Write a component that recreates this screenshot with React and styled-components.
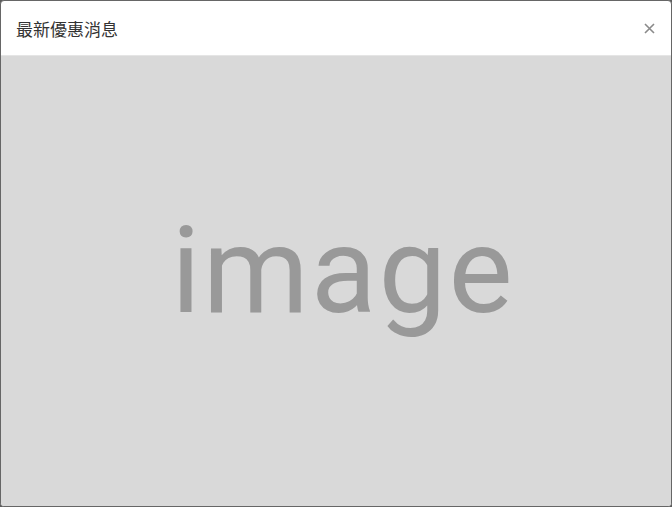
import styled, { createGlobalStyle } from "styled-components";

const GlobalStyle = createGlobalStyle`
  html, body {
    margin: 0;
    padding: 0;
    background: #5c5c5c;
  }
  * { box-sizing: border-box; }
`;

const Modal = styled.div`
  width: 672px;
  height: 507px;
  display: flex;
  flex-direction: column;
  background: #fff;
  border: 1px solid #666;
  border-radius: 4px;
  overflow: hidden;
`;

const Header = styled.div`
  height: 55px;
  flex-shrink: 0;
  display: flex;
  align-items: center;
  justify-content: space-between;
  padding: 0 15px 0 15px;
  border-bottom: 1px solid #e5e5e5;
`;

const Title = styled.h4`
  margin: 0;
  font-family: "Noto Sans CJK TC", "Noto Sans", sans-serif;
  font-weight: 400;
  font-size: 17px;
  color: #333;
`;

const Close = styled.button`
  border: 0;
  background: none;
  padding: 0;
  width: 14px;
  height: 14px;
  display: flex;
  align-items: center;
  justify-content: center;
  cursor: pointer;
`;

const Placeholder = styled.div`
  flex: 1;
  background: #d9d9d9;
  display: flex;
  align-items: center;
  justify-content: center;
  font-family: "Roboto", sans-serif;
  font-size: 121px;
  letter-spacing: 2px;
  color: #999;
  padding: 0 0 20px 14px;
  line-height: 1;
`;

const App = () => {
  return (
    <>
      <GlobalStyle />
      <Modal>
        <Header>
          <Title>最新優惠消息</Title>
          <Close aria-label="close">
            <svg width="11" height="11" viewBox="0 0 11 11">
              <path d="M1 1L10 10M10 1L1 10" stroke="#8a8a8a" strokeWidth="1.6" />
            </svg>
          </Close>
        </Header>
        <Placeholder>image</Placeholder>
      </Modal>
    </>
  );
};

export default App;
